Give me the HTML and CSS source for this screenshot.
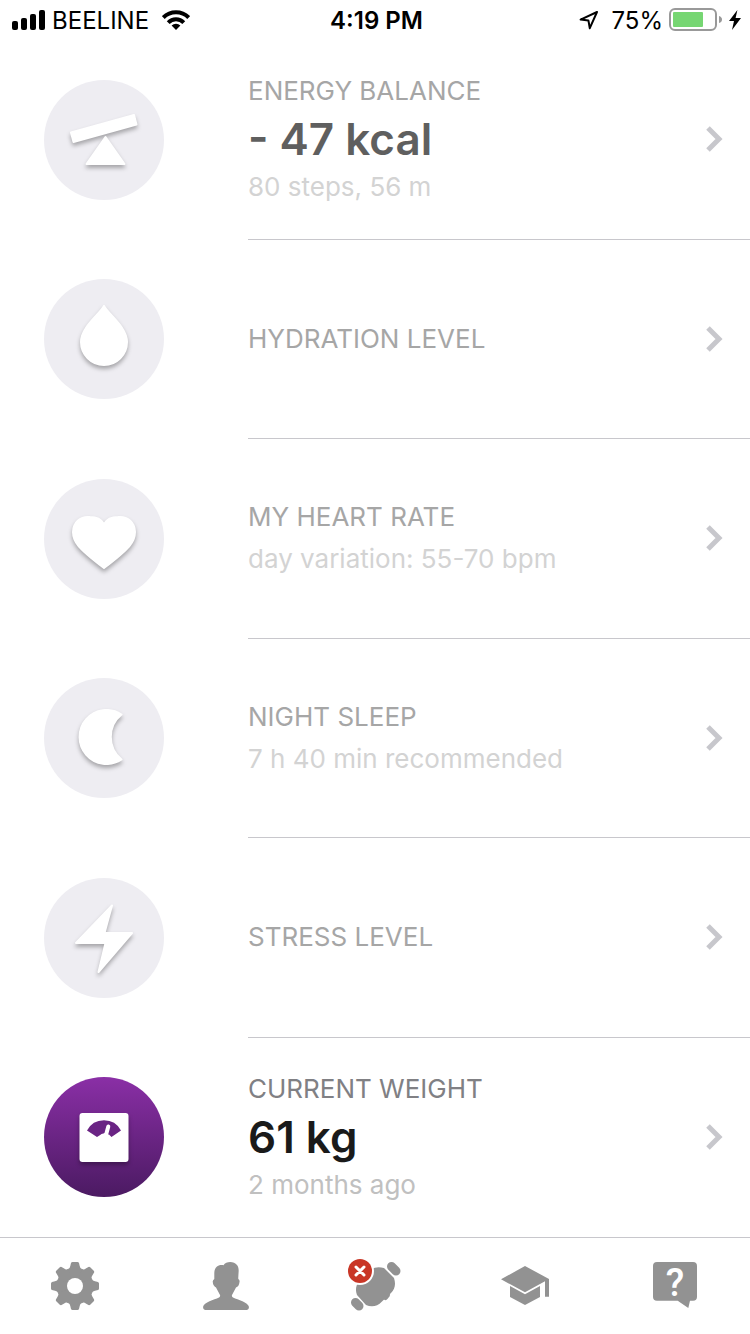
FILE: index.html
```html
<!DOCTYPE html>
<html lang="en">
<head>
    <meta charset="UTF-8">
    <meta name="viewport" content="width=device-width, initial-scale=1.0">
    <title>Health</title>
    <link rel="stylesheet" href="styles.css">
</head>
<body>

<header class="status-bar">
    <div class="status-left">
        <svg width="33" height="20" viewBox="0 0 33 20">
            <rect x="0" y="11" width="6" height="9" rx="2"/>
            <rect x="9" y="8" width="6" height="12" rx="2"/>
            <rect x="18" y="4" width="6" height="16" rx="2"/>
            <rect x="27" y="0" width="6" height="20" rx="2"/>
        </svg>
        <span class="carrier">BEELINE</span>
        <svg width="28" height="20" viewBox="0 0 28 20">
            <g fill="none" stroke="#000" stroke-width="4">
                <path d="M1.3 7.6 A18 18 0 0 1 26.7 7.6"/>
                <path d="M6.2 12.6 A11 11 0 0 1 21.8 12.6"/>
            </g>
            <path d="M9.6 15.6 A6.2 6.2 0 0 1 18.4 15.6 L14 20 Z"/>
        </svg>
    </div>
    <span class="time">4:19 PM</span>
    <div class="status-right">
        <svg class="location" width="20" height="20" viewBox="0 0 20 20">
            <path d="M18 2 L1.6 9.6 L9.4 10.4 L10.8 18.2 Z" fill="none" stroke="#000" stroke-width="2" stroke-linejoin="round"/>
        </svg>
        <span>75%</span>
        <svg width="54" height="24" viewBox="0 0 54 24">
            <rect x="1" y="1" width="46" height="21" rx="5" fill="none" stroke="#999" stroke-width="2"/>
            <rect x="4" y="4" width="30" height="15" rx="1" fill="#76d672"/>
            <path d="M50 8 Q53 9 53 11.500 Q53 14 50 15 Z" fill="#999"/>
        </svg>
        <svg width="12" height="20" viewBox="0 0 12 20">
            <path d="M8.400 0 L0 11 H5 L3 20 L12 8 H6.600 Z"/>
        </svg>
    </div>
</header>

<main class="list">
    <a class="row" href="#energy">
        <svg class="icon" viewBox="0 0 120 120">
            <circle cx="60" cy="60" r="60"/>
            <g class="glyph">
                <path d="M27 52.500 L90 35 L92.500 44.500 L29.500 62 Z"/>
                <path d="M61.500 57 L80.500 84 H42.500 Z"/>
            </g>
        </svg>
        <div class="info">
            <div class="text">
                <h2>ENERGY BALANCE</h2>
                <p class="value">- 47 kcal</p>
                <p class="note">80 steps, 56 m</p>
            </div>
            <svg class="chevron" viewBox="0 0 18 28"><path d="M3 3 L14 14 L3 25"/></svg>
        </div>
    </a>

    <a class="row" href="#hydration">
        <svg class="icon" viewBox="0 0 120 120">
            <circle cx="60" cy="60" r="60"/>
            <g class="glyph">
                <path d="M60 27 C64 35 83 48 83 63 A23 23 0 0 1 37 63 C37 48 56 35 60 27 Z"/>
            </g>
        </svg>
        <div class="info">
            <div class="text">
                <h2>HYDRATION LEVEL</h2>
            </div>
            <svg class="chevron" viewBox="0 0 18 28"><path d="M3 3 L14 14 L3 25"/></svg>
        </div>
    </a>

    <a class="row" href="#heart">
        <svg class="icon" viewBox="0 0 120 120">
            <circle cx="60" cy="60" r="60"/>
            <g class="glyph">
                <path d="M60 45 C63 40 68 38 74 38 C84 37 91 44 91 53 C91 63 86 69 60 89 C34 69 29 63 29 53 C29 44 36 37 46 38 C52 38 57 40 60 45 Z"/>
            </g>
        </svg>
        <div class="info">
            <div class="text">
                <h2>MY HEART RATE</h2>
                <p class="note">day variation: 55-70 bpm</p>
            </div>
            <svg class="chevron" viewBox="0 0 18 28"><path d="M3 3 L14 14 L3 25"/></svg>
        </div>
    </a>

    <a class="row" href="#sleep">
        <svg class="icon" viewBox="0 0 120 120">
            <circle cx="60" cy="60" r="60"/>
            <g class="glyph">
                <path d="M77.500 36.500 A27 27 0 1 0 77.500 81.500 A29 29 0 0 1 77.500 36.500 Z"/>
            </g>
        </svg>
        <div class="info">
            <div class="text">
                <h2>NIGHT SLEEP</h2>
                <p class="note">7 h 40 min recommended</p>
            </div>
            <svg class="chevron" viewBox="0 0 18 28"><path d="M3 3 L14 14 L3 25"/></svg>
        </div>
    </a>

    <a class="row" href="#stress">
        <svg class="icon" viewBox="0 0 120 120">
            <circle cx="60" cy="60" r="60"/>
            <g class="glyph">
                <path d="M68 27.500 L60.500 55 H88 L54.500 94 L61.500 65 H32 Z"/>
            </g>
        </svg>
        <div class="info">
            <div class="text">
                <h2>STRESS LEVEL</h2>
            </div>
            <svg class="chevron" viewBox="0 0 18 28"><path d="M3 3 L14 14 L3 25"/></svg>
        </div>
    </a>

    <a class="row active" href="#weight">
        <svg class="icon" viewBox="0 0 120 120">
            <defs>
                <linearGradient id="purple" x1="0" y1="0" x2="0" y2="1">
                    <stop offset="0" stop-color="#8a2fa6"/>
                    <stop offset="1" stop-color="#4b1a62"/>
                </linearGradient>
            </defs>
            <circle cx="60" cy="60" r="60"/>
            <g class="glyph">
                <rect x="36.500" y="37" width="47" height="47" rx="2"/>
            </g>
            <path d="M43 53.500 A19.200 19.200 0 0 1 77 53.500 L67.500 60 L65 57.500 H57 L53 60 Z" fill="#6a2484"/>
            <path d="M64.300 49.500 L62 58 M57 60.500 Q60 56 64 60.500" fill="none" stroke="#fff" stroke-width="4" stroke-linecap="round"/>
        </svg>
        <div class="info">
            <div class="text">
                <h2>CURRENT WEIGHT</h2>
                <p class="value">61 kg</p>
                <p class="note">2 months ago</p>
            </div>
            <svg class="chevron" viewBox="0 0 18 28"><path d="M3 3 L14 14 L3 25"/></svg>
        </div>
    </a>
</main>

<nav class="tab-bar">
    <a href="#settings" aria-label="Settings">
        <svg width="48" height="48" viewBox="-24 -24 48 48">
            <defs>
                <path id="tooth" d="M0 0 L-7 -17 Q-5 -17.500 -4.700 -20 L-4 -23 Q-3.500 -24 -2.500 -24 H2.500 Q3.500 -24 4 -23 L4.700 -20 Q5 -17.500 7 -17 Z"/>
            </defs>
            <circle r="18"/>
            <use href="#tooth"/>
            <use href="#tooth" transform="rotate(45)"/>
            <use href="#tooth" transform="rotate(90)"/>
            <use href="#tooth" transform="rotate(135)"/>
            <use href="#tooth" transform="rotate(180)"/>
            <use href="#tooth" transform="rotate(225)"/>
            <use href="#tooth" transform="rotate(270)"/>
            <use href="#tooth" transform="rotate(315)"/>
            <circle r="8" fill="#fff"/>
        </svg>
    </a>
    <a href="#profile" aria-label="Profile">
        <svg width="48" height="48" viewBox="0 0 48 48">
            <path d="M4 48 Q2 47.500 2 45 C3 40 13 38 18 35.500 Q19.500 34.500 19 33 L15 25.500 Q12 24 11.700 19.500 Q11.700 18 13.300 17 V11 C13.300 5 18 2 22.500 3.300 C25 -1 33 -1 36 3 C39 7 37 12 37.300 17 Q39 18 38.500 20 Q38 24.500 35 25.500 L31 33 Q30.500 34.500 32 35.500 C37 38 47 40 48 45 Q48 47.500 46 48 Z"/>
        </svg>
    </a>
    <a href="#device" aria-label="Device">
        <svg width="54" height="54" viewBox="0 0 54 54">
            <g fill="none" stroke="#929292" stroke-linecap="round">
                <path d="M43.500 7.500 L48 12" stroke-width="9"/>
                <path d="M7.500 43.500 L11 47" stroke-width="9"/>
                <path d="M39.500 36 L37.500 38.500" stroke-width="5"/>
            </g>
            <path d="M36 9 L46 19 C48 25 47 30 43 34 L34 42.500 C29 48 23 48 18 46 L9 36 C7 31 8 26 11 22 L23 10.500 C27 8 31 7.500 36 9 Z"/>
            <circle cx="12" cy="12" r="14" fill="#fff"/>
            <circle cx="12" cy="12" r="12" fill="#c93626"/>
            <path d="M8 8 L16 16 M16 8 L8 16" stroke="#fff" stroke-width="3" stroke-linecap="round"/>
        </svg>
    </a>
    <a href="#learn" aria-label="Learn">
        <svg width="48" height="48" viewBox="0 0 48 48">
            <path d="M0 17.300 L24 4 L48 17 V34.700 H44 V19.300 L24 30.300 Z"/>
            <path d="M9 24 L24 32.300 L39 24 V35 L24 43 L9 35 Z"/>
        </svg>
    </a>
    <a href="#help" aria-label="Help">
        <svg width="48" height="48" viewBox="0 0 48 48">
            <path d="M6 0 H42 Q46 0 46 4 V35 Q46 38.700 42 38.700 H39 L37.300 46 L26.700 38.700 H6 Q2 38.700 2 35 V4 Q2 0 6 0 Z"/>
            <text x="24" y="34" text-anchor="middle" class="question">?</text>
        </svg>
    </a>
</nav>

</body>
</html>
```
FILE: styles.css
```css
* {
    box-sizing: border-box;
}
body {
    margin: 0;
    min-height: 100vh;
    background: #fff;
    font-family: Inter, 'Liberation Sans', sans-serif;
    color: #000;
    display: flex;
    flex-direction: column;
}
h2, p {
    margin: 0;
    font-weight: 400;
}
svg {
    display: block;
    flex: none;
}

/* status bar */
.status-bar {
    display: grid;
    grid-template-columns: 1fr auto 1fr;
    align-items: center;
    height: 40px;
    padding: 0 9px 0 12px;
    font-size: 24px;
}
.status-left, .status-right {
    display: flex;
    align-items: center;
    gap: 7px;
}
.status-right {
    justify-content: flex-end;
    gap: 6px;
}
.carrier {
    margin-right: 6px;
}
.location {
    margin-right: 6px;
}
.time {
    font-weight: 600;
}

/* list */
.list {
    flex: 1;
    display: grid;
    grid-auto-rows: 1fr;
}
.row {
    min-height: 160px;
    display: flex;
    align-items: center;
    padding-left: 44px;
    text-decoration: none;
}
.icon {
    width: 120px;
    height: 120px;
    margin-right: 84px;
    fill: #eeedf2;
}
.glyph {
    fill: #fff;
    stroke: #fff;
    stroke-width: 2;
    stroke-linejoin: round;
    filter: drop-shadow(0 3px 2px rgba(0, 0, 0, 0.3));
}
.info {
    flex: 1;
    align-self: stretch;
    display: flex;
    align-items: center;
    justify-content: space-between;
    padding-right: 27px;
    border-bottom: 1px solid #c8c7cc;
}
.row:last-child .info {
    border-bottom: none;
}
.text h2 {
    font-size: 26px;
    line-height: 42px;
    color: #a6a6a6;
}
.value {
    font-size: 44px;
    line-height: 54px;
    font-weight: 600;
    color: #5f5f5f;
}
.note {
    font-size: 26px;
    line-height: 42px;
    color: #d3d3d3;
}
.chevron {
    width: 18px;
    height: 28px;
    fill: none;
    stroke: #c7c7cc;
    stroke-width: 5;
}

.active .icon {
    fill: url(#purple);
}
.text h2 {
    color: #a6a6a6;
}
.active .text h2 {
    color: #808084;
}
.active .value {
    color: #1a1a1a;
}
.active .note {
    color: #c0c0c0;
}

/* bottom tabs */
.tab-bar {
    display: flex;
    height: 97px;
    border-top: 1px solid #c8c7cc;
}
.tab-bar a {
    flex: 1;
    display: flex;
    align-items: center;
    justify-content: center;
    fill: #929292;
}
.question {
    font-family: Roboto, sans-serif;
    font-size: 38px;
    font-weight: 500;
    fill: #fff;
}
```
